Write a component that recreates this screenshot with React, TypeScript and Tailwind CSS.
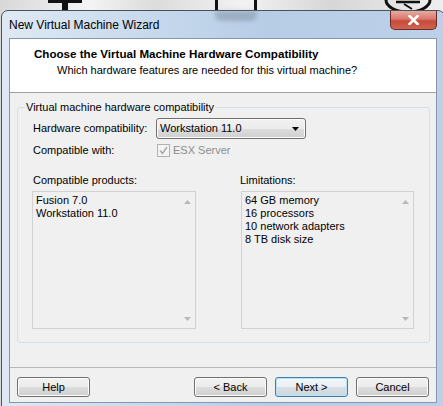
import React from "react";

function Btn({ children, def }: { children: React.ReactNode; def?: boolean }) {
  return (
    <div
      className={
        "w-[73px] h-[20px] rounded-[3px] border flex items-center justify-center text-[11px] leading-none " +
        (def
          ? "border-[#3c7fb1] shadow-[inset_0_0_0_1px_#b6e2f8] bg-[linear-gradient(to_bottom,#f4f8fb_0%,#e9eff3_50%,#d7dfe5_51%,#cfd8df_100%)]"
          : "border-[#707070] shadow-[inset_0_0_0_1px_#fcfcfc] bg-[linear-gradient(to_bottom,#f2f2f2_0%,#ebebeb_50%,#dddddd_51%,#cfcfcf_100%)]")
      }
    >
      {children}
    </div>
  );
}

function ListBox({ items, w }: { items: string[]; w: string }) {
  return (
    <div className={"h-[138px] border border-[#d2d2d2] bg-[#f0f0f0] flex " + w}>
      <div className="flex-1 pl-[3px] pt-[2px] leading-[13px]">
        {items.map((t) => (
          <div key={t}>{t}</div>
        ))}
      </div>
      <div className="w-[16px] flex flex-col items-center justify-between pt-[8px] pb-[7px]">
        <svg width="7" height="4" viewBox="0 0 7 4">
          <path d="M0 4 L3.5 0 L7 4 Z" fill="#b8b8b8" />
        </svg>
        <svg width="7" height="4" viewBox="0 0 7 4">
          <path d="M0 0 L3.5 4 L7 0 Z" fill="#b8b8b8" />
        </svg>
      </div>
    </div>
  );
}

export default function App() {
  return (
    <div className="relative w-[443px] h-[406px] overflow-hidden bg-[linear-gradient(to_right,#d8d8d8,#f4f4f4_20%,#dcdcdc_35%,#f2f2f2_55%,#d6d6d6_75%,#eeeeee)] font-['Liberation_Sans',Arial,sans-serif] text-[11px] text-black">
      {/* desktop icons peeking above the window */}
      <svg className="absolute left-0 top-0" width="443" height="14" viewBox="0 0 443 14">
        <rect x="48" y="0" width="34" height="3" fill="#111" />
        <rect x="62" y="0" width="6" height="12" fill="#111" />
        <rect x="215" y="0" width="3" height="10" fill="#111" />
        <rect x="254" y="0" width="3" height="10" fill="#111" />
        <path d="M386 0 A22 12 0 0 0 430 0" fill="none" stroke="#111" strokeWidth="3" />
        <path d="M396 2 L420 2" stroke="#111" strokeWidth="2.5" />
        <path d="M404 4 L412 9" stroke="#111" strokeWidth="2" />
      </svg>

      {/* window */}
      <div className="absolute left-[1px] top-[10px] w-[444px] h-[400px] rounded-t-[7px] border border-[#48525e] bg-[linear-gradient(to_right,#dfe9f3,#c6d8ec_35%,#b7cde6_60%,#bcd1e8)]">
        <div className="h-[27px] flex items-center pl-[7px] pt-[1px] text-[12px] text-black">
          New Virtual Machine Wizard
        </div>
        {/* shadow of desktop icon on the glass */}
        <div className="absolute left-[213px] top-[0px] w-[42px] h-[10px] rounded-b-[6px] bg-[#6d7d8f] opacity-40 blur-[2px]" />
        {/* close button */}
        <div className="absolute left-[388px] top-0 w-[47px] h-[19px] rounded-b-[5px] border border-[#6b2a2a] border-t-0 bg-[linear-gradient(to_bottom,#e9a99f_0%,#d9786c_45%,#c74a3a_55%,#d0644f_100%)] flex items-center justify-center">
          <svg width="11" height="10" viewBox="0 0 11 10">
            <path d="M1.5 1 L9.5 9 M9.5 1 L1.5 9" stroke="#ffffff" strokeWidth="2.6" strokeLinecap="square" />
          </svg>
        </div>

        {/* client area */}
        <div className="mx-[7px] h-[365px] border border-[#8597ad] bg-[#f0f0f0] flex flex-col">
          {/* header */}
          <div className="h-[54px] bg-white border-b border-[#a0a0a0] pl-[24px] pt-[7px]">
            <div className="font-bold text-[11.6px] leading-[15px]">Choose the Virtual Machine Hardware Compatibility</div>
            <div className="pl-[23px] mt-[2px] leading-[15px]">Which hardware features are needed for this virtual machine?</div>
          </div>

          {/* group */}
          <fieldset className="mt-[8px] ml-[7px] mr-[6px] border border-[#d5dfe5] rounded-[3px] px-0 pb-[13px]">
            <legend className="ml-[7px] px-[1px] leading-[13px]">Virtual machine hardware compatibility</legend>
            <div className="pt-[4px] pl-[15px]">
              <div className="flex items-center h-[21px]">
                <div className="w-[123px]">Hardware compatibility:</div>
                <div className="w-[150px] h-[21px] rounded-[3px] border border-[#707070] shadow-[inset_0_0_0_1px_#fbfbfb] bg-[linear-gradient(to_bottom,#f2f2f2_0%,#ebebeb_50%,#dddddd_51%,#cfcfcf_100%)] flex items-center pl-[3px] pr-[6px]">
                  <span className="flex-1">Workstation 11.0</span>
                  <svg width="7" height="4" viewBox="0 0 7 4">
                    <path d="M0 0 L7 0 L3.5 4 Z" fill="#000" />
                  </svg>
                </div>
              </div>
              <div className="flex items-center h-[14px] mt-[4px]">
                <div className="w-[124px]">Compatible with:</div>
                <div className="w-[13px] h-[13px] border border-[#b1b1b1] bg-[#f4f4f4] flex items-center justify-center">
                  <svg width="9" height="9" viewBox="0 0 9 9">
                    <path d="M1 4.5 L3.5 7.5 L8 1" fill="none" stroke="#a8a8a8" strokeWidth="1.4" />
                  </svg>
                </div>
                <span className="ml-[3px] text-[#8d8d8d]">ESX Server</span>
              </div>
            </div>
            <div className="flex mt-[17px] pl-[14px]">
              <div className="w-[164px]">
                <div className="pl-[1px] leading-[13px] mb-[4px]">Compatible products:</div>
                <ListBox w="w-[164px]" items={["Fusion 7.0", "Workstation 11.0"]} />
              </div>
              <div className="ml-[45px] w-[173px]">
                <div className="-ml-[1px] leading-[13px] mb-[4px]">Limitations:</div>
                <ListBox
                  w="w-[173px]"
                  items={["64 GB memory", "16 processors", "10 network adapters", "8 TB disk size"]}
                />
              </div>
            </div>
          </fieldset>

          {/* footer */}
          <div className="mt-auto h-[35px] border-t border-[#b9b9b9] pt-[9px] flex px-[7px]">
            <Btn>Help</Btn>
            <div className="flex-1" />
            <div className="flex gap-[8px]">
              <Btn>&lt; Back</Btn>
              <Btn def>Next &gt;</Btn>
              <Btn>Cancel</Btn>
            </div>
          </div>
        </div>
      </div>
    </div>
  );
}
